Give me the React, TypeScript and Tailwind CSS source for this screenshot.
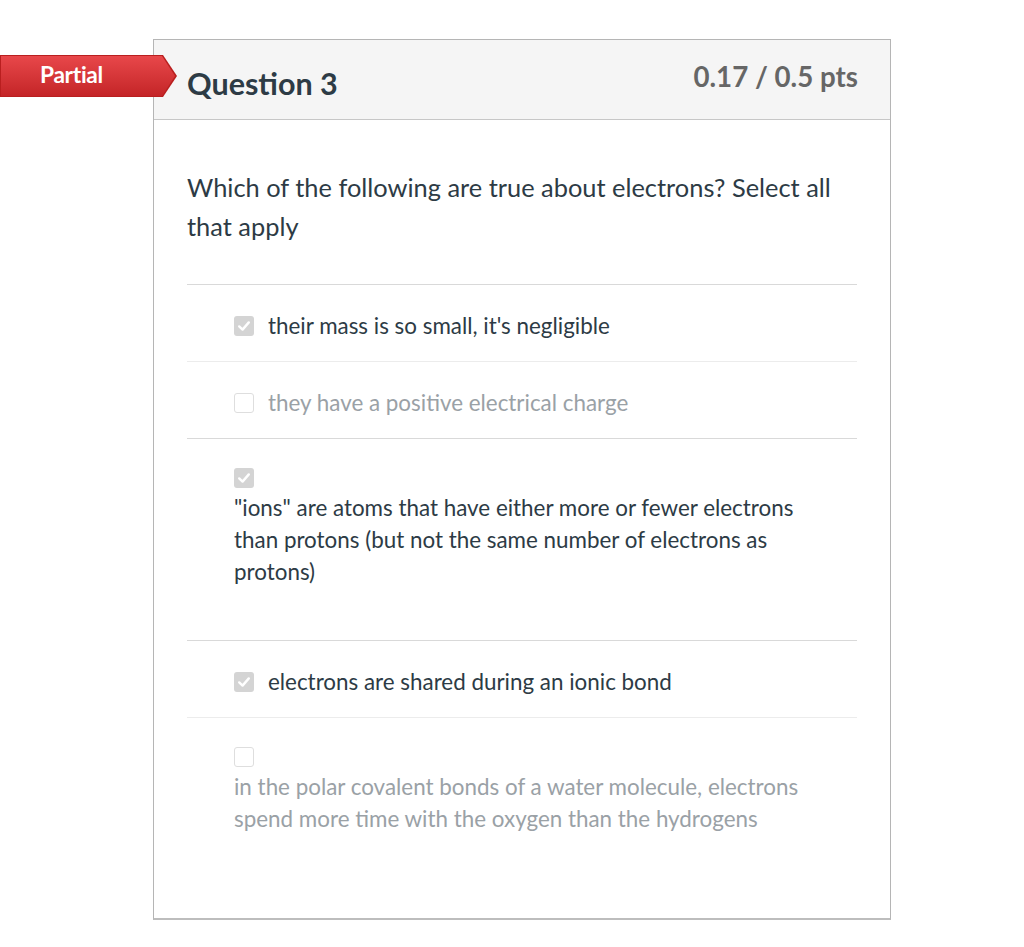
import React from 'react';

type Answer = {
  text: string;
  selected: boolean;
  stacked: boolean;
  line: string;
  pb: string;
};

const answers: Answer[] = [
  { text: "their mass is so small, it's negligible", selected: true, stacked: false, line: 'border-[#ececec]', pb: '' },
  { text: 'they have a positive electrical charge', selected: false, stacked: false, line: 'border-[#d9d9d9]', pb: '' },
  {
    text: '"ions" are atoms that have either more or fewer electrons than protons (but not the same number of electrons as protons)',
    selected: true,
    stacked: true,
    line: 'border-[#d9d9d9]',
    pb: 'pb-[52px]',
  },
  { text: 'electrons are shared during an ionic bond', selected: true, stacked: false, line: 'border-[#ececec]', pb: '' },
  {
    text: 'in the polar covalent bonds of a water molecule, electrons spend more time with the oxygen than the hydrogens',
    selected: false,
    stacked: true,
    line: 'border-transparent',
    pb: 'pb-[82px]',
  },
];

function Checkbox({ checked }: { checked: boolean }) {
  if (checked) {
    return (
      <span className="w-[20px] h-[20px] shrink-0 rounded-[3px] bg-[#d4d4d4] flex items-center justify-center">
        <svg viewBox="0 0 20 20" className="w-[16px] h-[16px]">
          <path d="M4 10.5 L8.2 14.5 L16 5.5" fill="none" stroke="#fff" strokeWidth="3" strokeLinecap="round" strokeLinejoin="round" />
        </svg>
      </span>
    );
  }
  return <span className="w-[20px] h-[20px] shrink-0 rounded-[3px] bg-white border border-[#dedede]" />;
}

export default function App() {
  return (
    <div className="relative w-[1024px] h-[947px] bg-white font-['Lato','Open_Sans',sans-serif]">
      <div className="absolute left-0 top-[55px] w-[177px] h-[42px] z-10 bg-[#b91f1f] [clip-path:polygon(0_0,163px_0,177px_50%,163px_100%,0_100%)]">
        <div className="absolute inset-[1px] right-[2px] bg-gradient-to-b from-[#e8474a] to-[#c42427] [clip-path:polygon(0_0,161px_0,174px_50%,161px_100%,0_100%)] flex items-center pl-[39px]">
          <span className="text-white font-bold text-[22.7px] leading-none tracking-[-0.3px] -mt-[2px]">Partial</span>
        </div>
      </div>

      <div className="pt-[39px] pl-[153px]">
        <div className="w-[738px] h-[881px] border border-[#b5b5b5] border-b-2 border-b-[#bdbdbd] bg-white flex flex-col">
          <div className="h-[81px] bg-[#f5f5f5] border-b border-[#c7c7c7] flex justify-between pl-[33px] pr-[32px]">
            <h2 className="text-[#2d3b45] font-bold text-[30.5px] leading-none pt-[28px]">Question 3</h2>
            <div className="text-[#666666] font-bold text-[27.7px] leading-none pt-[23px]">0.17 / 0.5 pts</div>
          </div>

          <div className="px-[33px] pt-[48px]">
            <p className="text-[#2d3b45] text-[25.4px] leading-[39px] pb-[38px] border-b border-[#d9d9d9]">
              Which of the following are true about electrons? Select all that apply
            </p>

            {answers.map((a, i) => (
              <div key={i} className={`pl-[47px] border-b ${a.line} ${a.stacked ? `pt-[29px] ${a.pb}` : 'pt-[25px] pb-[19px]'}`}>
                {a.stacked ? (
                  <div className="flex flex-col">
                    <Checkbox checked={a.selected} />
                    <div className={`mt-[4px] text-[22.4px] leading-[32px] max-w-[580px] ${a.selected ? 'text-[#2d3b45]' : 'text-[#9aa1a6]'}`}>
                      {a.text}
                    </div>
                  </div>
                ) : (
                  <div className="flex items-center gap-[14px] h-[32px]">
                    <Checkbox checked={a.selected} />
                    <span className={`text-[22.4px] leading-[32px] ${a.selected ? 'text-[#2d3b45]' : 'text-[#9aa1a6]'}`}>{a.text}</span>
                  </div>
                )}
              </div>
            ))}
          </div>
        </div>
      </div>
    </div>
  );
}
